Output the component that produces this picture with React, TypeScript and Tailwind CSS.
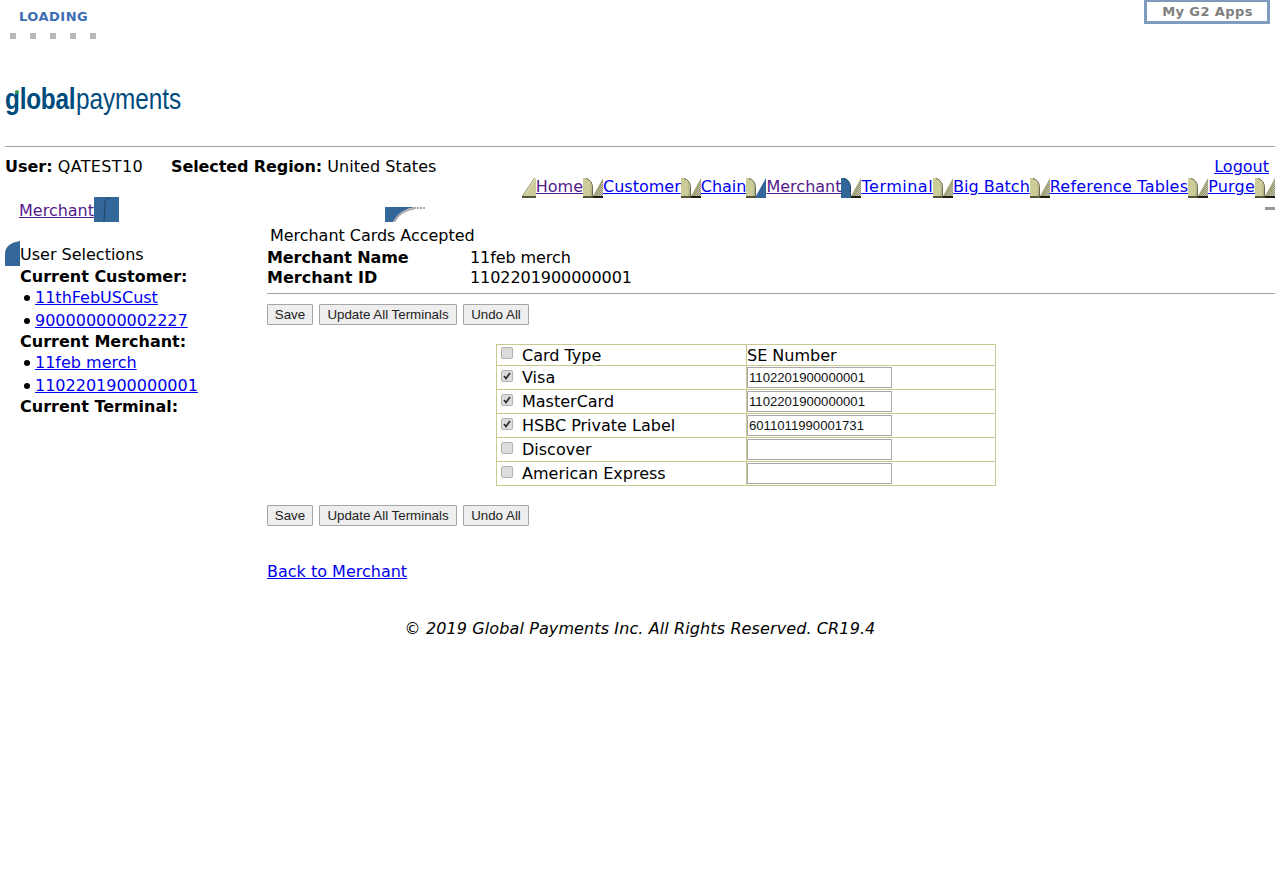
import React from "react";

const KHAKI = "#cccc99";
const BLUE = "#336699";

function Half({ side, kind }: { side: "l" | "r"; kind: "khaki" | "blue" }) {
  const isKhaki = kind === "khaki";
  if (side === "l") {
    return (
      <svg width="10" height="20" viewBox="0 0 10 20" className="block shrink-0">
        <path d="M0 0 L3 0 C7 1 9.5 5 10 10 L10 18 L0 18 Z" fill={isKhaki ? KHAKI : BLUE} />
        {isKhaki && <path d="M7 18 C8 13 8 9 6.5 5 C8.5 8 9.5 12 9.5 18 Z" fill="#b4b48c" />}
        <path d="M3 0.5 C7 1.5 9.5 5 9.5 10 L9.5 18" fill="none" stroke={isKhaki ? "#66664a" : "#224466"} strokeWidth="1" />
        <rect x="0" y="18" width="10" height="2" fill={isKhaki ? "#55553a" : BLUE} />
      </svg>
    );
  }
  return (
    <svg width="10" height="20" viewBox="0 0 10 20" className="block shrink-0">
      <defs>
        <pattern id="dither" width="2" height="2" patternUnits="userSpaceOnUse">
          <rect width="2" height="2" fill="#8f8f6b" />
          <rect width="1" height="1" fill="#c9c9bb" />
          <rect x="1" y="1" width="1" height="1" fill="#c9c9bb" />
        </pattern>
      </defs>
      <path d="M10 0 L0 18 L10 18 Z" fill={isKhaki ? "#a3a37c" : BLUE} />
      {isKhaki && <path d="M10 3 L5 18 L10 18 Z" fill="url(#dither)" />}
      <rect x="0" y="18" width="10" height="2" fill={isKhaki ? "#1d1d10" : BLUE} />
    </svg>
  );
}

function Sep({ left, right }: { left: "khaki" | "blue"; right: "khaki" | "blue" }) {
  return (
    <span className="flex shrink-0 mt-[1px] h-[20px]">
      <Half side="l" kind={left} />
      <Half side="r" kind={right} />
    </span>
  );
}

function StartCap() {
  return (
    <svg width="14" height="20" viewBox="0 0 14 20" className="block shrink-0 mt-[1px]">
      <path d="M14 0 L12.5 0 L0 18 L14 18 Z" fill={KHAKI} />
      <path d="M13.5 0 L3 16" stroke="#e8e8d0" strokeWidth="1" fill="none" />
      <path d="M12.5 0 L0.5 18" stroke="#9c9c78" strokeWidth="1" fill="none" />
      <rect x="0" y="18" width="14" height="2" fill="#55553a" />
    </svg>
  );
}

function NavLink({ children, visited, extra }: { children: React.ReactNode; visited?: boolean; extra?: string }) {
  return (
    <a href="#" className={`underline whitespace-nowrap leading-5 ${visited ? "text-[#551a8b]" : "text-[#0000ee]"} ${extra ?? ""}`}>
      {children}
    </a>
  );
}

function Btn({ children, w }: { children: React.ReactNode; w: string }) {
  return (
    <button className={`${w} h-[21px] pt-px bg-[#eeeeee] border border-[#a6a6a6] rounded-[1px] text-[13.33px] text-[#222222] font-['Liberation_Sans',Arial,sans-serif] leading-none`}>
      {children}
    </button>
  );
}

function Buttons() {
  return (
    <div className="flex gap-[6px]">
      <Btn w="w-[46px]">Save</Btn>
      <Btn w="w-[138px]">Update All Terminals</Btn>
      <Btn w="w-[66px]">Undo All</Btn>
    </div>
  );
}

function Bullet({ children, h }: { children: React.ReactNode; h: string }) {
  return (
    <div className={`flex items-center ${h}`}>
      <span className="w-[14px] mr-px flex justify-center">
        <span className="block w-[6px] h-[6px] rounded-full bg-black" />
      </span>
      <a href="#" className="underline text-[#0000ee]">{children}</a>
    </div>
  );
}

const rows = [
  { name: "Visa", value: "1102201900000001", checked: true },
  { name: "MasterCard", value: "1102201900000001", checked: true },
  { name: "HSBC Private Label", value: "6011011990001731", checked: true },
  { name: "Discover", value: "", checked: false },
  { name: "American Express", value: "", checked: false },
];

function Check({ checked, lift }: { checked: boolean; lift: string }) {
  return (
    <span className={`w-[12px] h-[12px] ml-[4px] mr-[9px] ${lift} rounded-[2px] border border-[#b0b0b0] bg-[#dcdcdc] flex items-center justify-center shrink-0`}>
      {checked && (
        <svg width="10" height="10" viewBox="0 0 10 10">
          <path d="M2 5 L4 7.5 L8 2" stroke="#333333" strokeWidth="1.8" fill="none" />
        </svg>
      )}
    </span>
  );
}

export default function App() {
  return (
    <div className="min-h-[869px] bg-white text-black font-['DejaVu_Sans',Verdana,sans-serif] text-[16px] leading-5 px-[5px]">
      <div className="flex justify-between h-[85px]">
        <div className="pl-[5px]">
          <div className="pl-[9px] pt-[7px] text-[#3d6db3] text-[13px] font-bold leading-5 tracking-[0.5px]">LOADING</div>
          <div className="flex gap-[14px] mt-[6px]">
            {[0, 1, 2, 3, 4].map((i) => (
              <span key={i} className="w-[6px] h-[6px] bg-[#b8b8b8]" />
            ))}
          </div>
        </div>
        <div className="mr-[5px] w-[126px] h-[24px] border-[3px] border-[#7f9bbd] border-t-[2px] pl-[1px] text-[13px] font-bold text-[#808080] text-center leading-[19px] tracking-[0.4px]">
          My G2 Apps
        </div>
      </div>

      <div className="relative h-[32px] flex items-center text-[#004b7d] font-['Liberation_Sans',Arial,sans-serif] text-[29px] leading-none">
        <div className="flex origin-left scale-x-[0.84] whitespace-nowrap -mt-[3px]">
          <span className="font-bold tracking-[-0.3px]">global</span>
          <span className="font-normal tracking-[-0.1px] ml-[1px]">payments</span>
        </div>
        <span className="absolute left-[10px] top-[5px] w-[4px] h-[4px] rounded-full bg-[#2e9e48]" />
      </div>

      <div className="h-px bg-[#a0a0a0] mt-[29px]" />

      <div className="flex justify-between mt-[10px] h-[20px]">
        <div className="whitespace-nowrap">
          <b>User:</b> <span className="tracking-[0.35px]">QATEST10</span><span className="inline-block w-[28px]" /><b className="tracking-[-0.1px]">Selected Region:</b> <span className="tracking-[0.08px]">United States</span>
        </div>
        <a href="#" className="underline text-[#0000ee] mr-[6px]">Logout</a>
      </div>

      <div className="flex justify-end h-[20px]">
        <StartCap />
        <NavLink visited>Home</NavLink>
        <Sep left="khaki" right="khaki" />
        <NavLink>Customer</NavLink>
        <Sep left="khaki" right="khaki" />
        <NavLink>Chain</NavLink>
        <Sep left="khaki" right="blue" />
        <NavLink visited>Merchant</NavLink>
        <Sep left="blue" right="khaki" />
        <NavLink extra="tracking-[0.5px]">Terminal</NavLink>
        <Sep left="khaki" right="khaki" />
        <NavLink>Big Batch</NavLink>
        <Sep left="khaki" right="khaki" />
        <NavLink extra="tracking-[0.19px]">Reference Tables</NavLink>
        <Sep left="khaki" right="khaki" />
        <NavLink extra="tracking-[0.2px]">Purge</NavLink>
        <Sep left="khaki" right="khaki" />
      </div>

      <div className="flex">
        <aside className="w-[262px] shrink-0">
          <div className="flex pl-[14px] h-[25px]">
            <a href="#" className="underline text-[#551a8b] leading-[28px] h-[25px]">Merchant</a>
            <svg width="25" height="25" viewBox="0 0 25 25" className="block shrink-0">
              <rect width="25" height="25" fill={BLUE} />
              <path d="M10 25 L11 4 Q11 1 16 1" stroke="#224466" fill="none" />
            </svg>
          </div>
          <div className="flex mt-[19px] h-[25px]">
            <svg width="15" height="25" viewBox="0 0 15 25" className="block shrink-0">
              <path d="M0 25 L0 12 Q1 2 15 0 L15 25 Z" fill={BLUE} />
            </svg>
            <span className="leading-[27px]">User Selections</span>
          </div>
          <div className="pl-[15px]">
            <div className="font-bold leading-[20px] mt-[1px] h-[20px]">Current Customer:</div>
            <Bullet h="h-[22px]">11thFebUSCust</Bullet>
            <Bullet h="h-[23px]">900000000002227</Bullet>
            <div className="font-bold h-[20px] leading-[20px]">Current Merchant:</div>
            <Bullet h="h-[22px]">11feb merch</Bullet>
            <Bullet h="h-[23px]">1102201900000001</Bullet>
            <div className="font-bold h-[20px] leading-[20px]">Current Terminal:</div>
          </div>
        </aside>

        <main className="flex-1 min-w-0">
          <div className="flex justify-between items-start h-[25px] pt-[10px]">
            <svg width="40" height="15" viewBox="0 0 40 15" className="block ml-[118px]">
              <path d="M0 0 L30 0 Q15 2 8 15 L0 15 Z" fill={BLUE} />
              <path d="M9 15 Q15 3.5 29 1.5" stroke="#aaaaaa" strokeWidth="2" fill="none" />
              <path d="M29 1 L40 1" stroke="#aaaaaa" strokeWidth="2" strokeDasharray="2 1" fill="none" />
            </svg>
            <span className="block w-[10px] h-[3px] bg-[#999999]" />
          </div>
          <div className="pl-[3px] mt-[4px] h-[20px] tracking-[-0.04px]">Merchant Cards Accepted</div>
          <div className="flex h-[20px] mt-[2px]"><b className="w-[203px] tracking-[-0.08px]">Merchant Name</b><span className="tracking-[-0.08px]">11feb merch</span></div>
          <div className="flex h-[20px]"><b className="w-[203px]">Merchant ID</b><span className="tracking-[-0.06px]">1102201900000001</span></div>
          <div className="h-px bg-[#a0a0a0] mt-[5px] mb-[10px]" />
          <Buttons />
          <table className="border-collapse ml-[229px] mt-[19px] w-[500px] table-fixed">
            <tbody>
              <tr className="h-[21px]">
                <td className="border border-[#c8c890] w-[250px] p-0">
                  <div className="flex items-center h-[20px] pt-px"><Check checked={false} lift="mb-[5px]" />Card Type</div>
                </td>
                <td className="border border-[#c8c890] p-0">
                  <div className="h-[20px] leading-[22px]">SE Number</div>
                </td>
              </tr>
              {rows.map((r) => (
                <tr key={r.name} className="h-[24px]">
                  <td className="border border-[#c8c890] p-0">
                    <div className="flex items-center h-[23px]"><Check checked={r.checked} lift="mb-[4px]" />{r.name}</div>
                  </td>
                  <td className="border border-[#c8c890] p-0">
                    <input
                      readOnly
                      value={r.value}
                      className="block w-[145px] h-[21px] border border-[#a9a9a9] px-[1px] text-[13.15px] text-[#111111] bg-white font-['Liberation_Sans',Arial,sans-serif]"
                    />
                  </td>
                </tr>
              ))}
            </tbody>
          </table>
          <div className="mt-[19px]"><Buttons /></div>
          <div className="mt-[36px]"><a href="#" className="underline text-[#0000ee]">Back to Merchant</a></div>
        </main>
      </div>
      <div className="text-center italic mt-[37px] tracking-[0.11px]">© 2019 Global Payments Inc. All Rights Reserved. CR19.4</div>
    </div>
  );
}
